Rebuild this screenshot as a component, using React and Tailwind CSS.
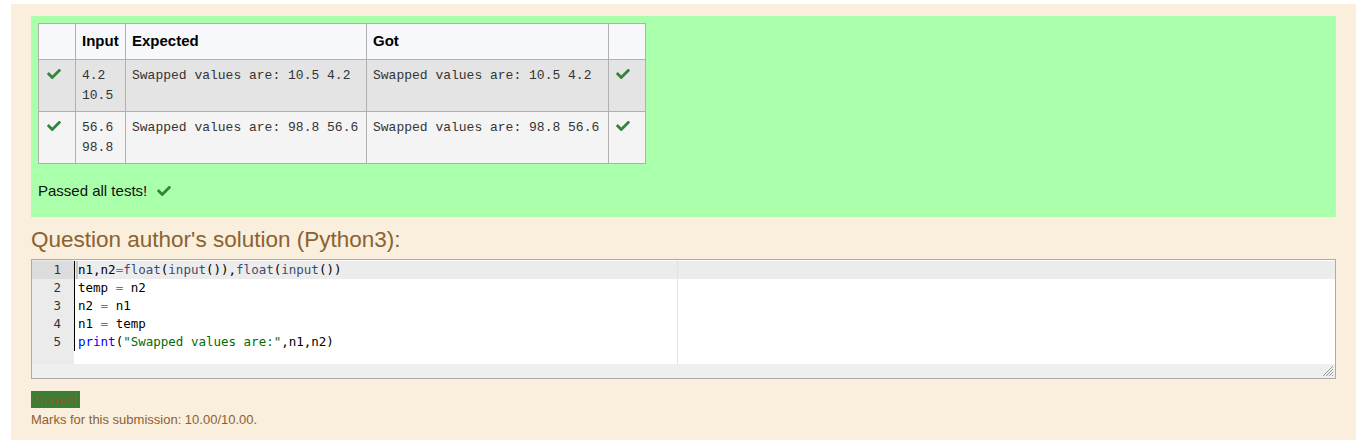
import React from "react";

function Check({ className = "" }) {
  return (
    <svg viewBox="0 0 512 370" className={className} fill="#33843a">
      <path d="M173.898 367.404l-166.4-166.4c-9.997-9.997-9.997-26.206 0-36.204l36.203-36.204c9.997-9.998 26.207-9.998 36.204 0L192 240.69 432.095 0.596c9.997-9.997 26.207-9.997 36.204 0l36.203 36.204c9.997 9.997 9.997 26.206 0 36.204l-294.4 294.401c-9.998 9.997-26.207 9.997-36.204-.001z" />
    </svg>
  );
}

const rows = [
  { input: ["4.2", "10.5"], expected: "Swapped values are: 10.5 4.2", got: "Swapped values are: 10.5 4.2", bg: "bg-[#e4e4e4]" },
  { input: ["56.6", "98.8"], expected: "Swapped values are: 98.8 56.6", got: "Swapped values are: 98.8 56.6", bg: "bg-[#f4f4f4]" },
];

const mono = { fontFamily: '"Liberation Mono", monospace' };
const code = { fontFamily: '"DejaVu Sans Mono", monospace' };

export default function App() {
  return (
    <div className="bg-white min-h-[440px] pl-[11px] pr-[6px] pt-[4px]" style={{ fontFamily: '"Liberation Sans", Arial, sans-serif' }}>
      <div className="bg-[#faeedc] px-5 pt-3 pb-3 h-[436px]">
        <div className="bg-[#aaffaa] px-[7px] pt-[7px] pb-[15px]">
          <table className="border-collapse table-fixed w-[607px] text-black">
            <colgroup>
              <col className="w-[37px]" />
              <col className="w-[50px]" />
              <col className="w-[241px]" />
              <col className="w-[242px]" />
              <col className="w-[37px]" />
            </colgroup>
            <thead>
              <tr className="bg-[#f7f8fc]">
                <th className="border border-[#b0b0b0] h-[36px]"></th>
                <th className="border border-[#b0b0b0] px-[6px] text-left text-[15px] font-bold">Input</th>
                <th className="border border-[#b0b0b0] px-[6px] text-left text-[15px] font-bold">Expected</th>
                <th className="border border-[#b0b0b0] px-[6px] text-left text-[15px] font-bold">Got</th>
                <th className="border border-[#b0b0b0]"></th>
              </tr>
            </thead>
            <tbody>
              {rows.map((r, i) => (
                <tr key={i} className={r.bg}>
                  <td className="border border-[#b0b0b0] h-[52px] align-top pl-[8px] pt-[9px]">
                    <Check className="w-[14px] h-[10px]" />
                  </td>
                  <td className="border border-[#b0b0b0] align-top px-[6px] pt-[6px] text-[13px] leading-[20px] text-[#333]" style={mono}>
                    <div>{r.input[0]}</div>
                    <div>{r.input[1]}</div>
                  </td>
                  <td className="border border-[#b0b0b0] align-top px-[6px] pt-[6px] text-[13px] leading-[20px] text-[#333] whitespace-pre" style={mono}>
                    {r.expected}
                  </td>
                  <td className="border border-[#b0b0b0] align-top px-[6px] pt-[6px] text-[13px] leading-[20px] text-[#333] whitespace-pre" style={mono}>
                    {r.got}
                  </td>
                  <td className="border border-[#b0b0b0] align-top pl-[7px] pt-[9px]">
                    <Check className="w-[14px] h-[10px]" />
                  </td>
                </tr>
              ))}
            </tbody>
          </table>
          <div className="mt-[16px] flex items-center text-[15px] leading-[22px] text-[#111]">
            <span>Passed all tests!</span>
            <Check className="ml-[10px] w-[14px] h-[10px]" />
          </div>
        </div>

        <h3 className="mt-[9px] text-[22.5px] leading-[27px] text-[#8a6232] font-normal">
          Question author's solution (Python3):
        </h3>

        <div className="mt-[6px] border border-[#ababab] bg-white">
          <div className="flex h-[104px] relative">
            <div className="w-[42px] bg-[#ebebeb] text-[12.5px] leading-[18px] text-[#333] pt-px" style={code}>
              {[1, 2, 3, 4, 5].map((n) => (
                <div key={n} className={"h-[18px] text-right pr-[13px] " + (n === 1 ? "bg-[#dcdcdc]" : "")}>
                  {n}
                </div>
              ))}
            </div>
            <div className="flex-1 relative text-[12.5px] leading-[18px] text-black pt-px" style={code}>
              <div className="border-l border-black w-full">
                <div className="h-[18px] bg-[#ececec] pl-[3px] whitespace-pre relative">
                  <span className="absolute left-[1px] top-0 w-[2px] h-[18px] bg-[#c8c8c8]"></span>
                  n1,n2<span className="text-[#687687]">=</span><span className="text-[#3c4c72]">float</span>(<span className="text-[#3c4c72]">input</span>()),<span className="text-[#3c4c72]">float</span>(<span className="text-[#3c4c72]">input</span>())
                </div>
                <div className="h-[18px] pl-[3px] whitespace-pre">temp <span className="text-[#687687]">=</span> n2</div>
                <div className="h-[18px] pl-[3px] whitespace-pre">n2 <span className="text-[#687687]">=</span> n1</div>
                <div className="h-[18px] pl-[3px] whitespace-pre">n1 <span className="text-[#687687]">=</span> temp</div>
                <div className="h-[18px] pl-[3px] whitespace-pre">
                  <span className="text-[#0000ff]">print</span>(<span className="text-[#036a07]">"Swapped values are:"</span>,n1,n2)
                </div>
              </div>
              <div className="absolute left-[603px] top-0 bottom-0 w-px bg-[#e2e2e2]"></div>
            </div>
          </div>
          <div className="h-[14px] bg-[#efefef] flex justify-end items-end">
            <svg viewBox="0 0 12 12" className="w-[12px] h-[12px] mr-[1px] mb-[1px]" stroke="#999" strokeWidth="1">
              <line x1="11" y1="1" x2="1" y2="11" />
              <line x1="11" y1="4" x2="4" y2="11" />
              <line x1="11" y1="7" x2="7" y2="11" />
              <line x1="11" y1="10" x2="10" y2="11" />
            </svg>
          </div>
        </div>

        <div className="mt-[12px] w-fit bg-[#3a7f35] text-[#8b5a2b] text-[13px] leading-[17px] h-[17px] px-[3px]">
          Correct
        </div>
        <div className="mt-[3px] text-[13px] leading-[18px] text-[#8a6232]">
          Marks for this submission: 10.00/10.00.
        </div>
      </div>
    </div>
  );
}
